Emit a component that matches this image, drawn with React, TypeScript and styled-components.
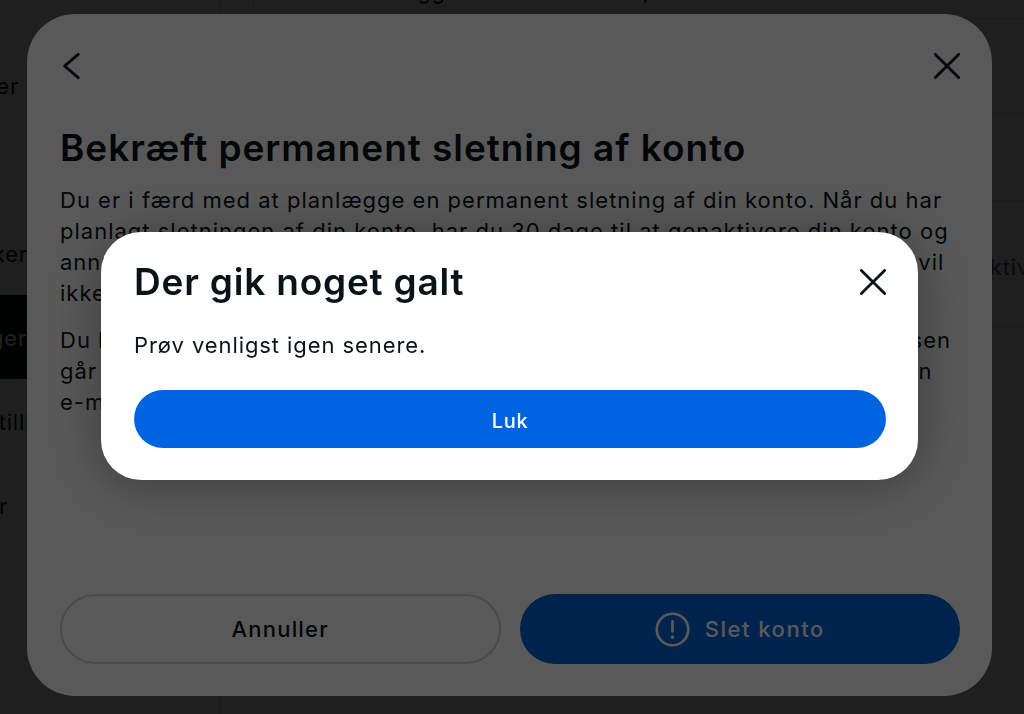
import styled, { createGlobalStyle } from 'styled-components'

const GlobalStyle = createGlobalStyle`
  html, body {
    margin: 0;
    height: 100%;
    background: #fff;
    overflow: hidden;
  }

  body {
    font-family: 'Inter', 'Liberation Sans', sans-serif;
    color: #0a1317;
  }

  * {
    box-sizing: border-box;
  }
`

const Page = styled.div`
  display: flex;
  width: 1024px;
  height: 714px;
  overflow: hidden;
`

const Sidebar = styled.nav`
  flex: 0 0 221px;
  width: 221px;
  min-width: 0;
  padding-top: 43px;
  border-right: 1px solid #dee3e9;
`

const SideRow = styled.div<{ $active?: boolean; $end: number }>`
  display: flex;
  justify-content: flex-end;
  align-items: center;
  height: 84px;
  padding-top: 2px;
  padding-right: ${({ $end }) => 220 - $end}px;
  white-space: nowrap;
  font-size: 22px;
  letter-spacing: 0.8px;
  background: ${({ $active }) => ($active ? '#0a1317' : 'transparent')};
  color: ${({ $active }) => ($active ? '#fff' : '#0a1317')};
`

const Main = styled.main`
  flex: 1;
  margin-left: 32px;
  height: 520px;
  border-left: 1px solid #dee3e9;
  min-width: 0;
  overflow: hidden;
`

const MainRow = styled.div<{ $height: number }>`
  display: flex;
  justify-content: flex-end;
  align-items: center;
  height: ${({ $height }) => $height}px;
  border-bottom: 1px solid #dee3e9;
  white-space: nowrap;
  font-size: 22px;
  letter-spacing: 0.8px;
  color: #465a69;
`

const TopText = styled.div`
  align-self: flex-end;
  margin-bottom: 16px;
  margin-right: 374px;
  line-height: 22px;
  color: #0a1317;
`

const StatusText = styled.span`
  margin-right: -6px;
  padding-top: 6px;
`

const Overlay = styled.div<{ $pad: string }>`
  position: fixed;
  inset: 0;
  display: flex;
  padding: ${({ $pad }) => $pad};
  background: rgba(0, 0, 0, 0.65);
`

const Modal = styled.section`
  flex: 1;
  min-width: 0;
  display: flex;
  flex-direction: column;
  padding: 39px 32px 32px 33px;
  border-radius: 48px;
  background: #fff;
`

const ModalHeader = styled.div`
  display: flex;
  justify-content: space-between;
  align-items: center;
  height: 26px;
`

const IconButton = styled.button`
  display: flex;
  padding: 0;
  border: 0;
  background: none;
  color: #0a1317;
`

const BackButton = styled(IconButton)`
  margin-left: 3px;
`

const ModalTitle = styled.h1`
  margin: 47px 0 15px;
  font-size: 37px;
  line-height: 44px;
  font-weight: 600;
  letter-spacing: 0.95px;
  white-space: nowrap;
`

const Paragraph = styled.p`
  margin: 0 0 16px;
  font-size: 22px;
  line-height: 31px;
  letter-spacing: 1px;
  white-space: nowrap;
`

const ModalFooter = styled.div`
  display: grid;
  grid-template-columns: 1fr 1fr;
  gap: 19px;
  margin-top: auto;
`

const FooterButton = styled.button<{ $primary?: boolean }>`
  display: flex;
  justify-content: center;
  align-items: center;
  gap: 15px;
  height: 70px;
  border-radius: 35px;
  border: ${({ $primary }) => ($primary ? '0' : '2px solid #cbd2d9')};
  background: ${({ $primary }) => ($primary ? '#0064e0' : 'transparent')};
  color: ${({ $primary }) => ($primary ? '#fff' : '#0a1317')};
  font-family: inherit;
  font-size: 22px;
  font-weight: 500;
  letter-spacing: ${({ $primary }) => ($primary ? '1.5px' : '1.2px')};
`

const Dialog = styled.section`
  flex: 1;
  min-width: 0;
  display: flex;
  flex-direction: column;
  padding: 28px 32px 32px 33px;
  border-radius: 40px;
  background: #fff;
  box-shadow: 0 4px 56px rgba(0, 0, 0, 0.35);
`

const DialogHeader = styled.div`
  display: flex;
  justify-content: space-between;
  align-items: center;
  height: 44px;
`

const DialogTitle = styled.h2`
  margin: 0;
  font-size: 37px;
  font-weight: 600;
  line-height: 44px;
  letter-spacing: 0.8px;
`

const DialogText = styled.p`
  margin: 26px 0 29px;
  font-size: 22px;
  line-height: 31px;
  letter-spacing: 0.92px;
`

const CloseDialogButton = styled.button`
  height: 58px;
  padding: 3px 0 0;
  border: 0;
  border-radius: 29px;
  background: #0064e0;
  color: #fff;
  font-family: inherit;
  font-size: 20px;
  font-weight: 500;
  letter-spacing: 0.7px;
`

const CloseIcon = () => (
  <svg width="26" height="26" viewBox="0 0 26 26" fill="none" stroke="currentColor" strokeWidth="2.8" strokeLinecap="round">
    <path d="M1.4 1.4l23.2 23.2M24.6 1.4L1.4 24.6" />
  </svg>
)

const BackIcon = () => (
  <svg width="17" height="26" viewBox="0 0 17 26" fill="none" stroke="currentColor" strokeWidth="2.8" strokeLinecap="round" strokeLinejoin="round">
    <path d="M15.2 1.4L1.6 13l13.6 11.6" />
  </svg>
)

const AlertIcon = () => (
  <svg width="35" height="35" viewBox="0 0 36 36" fill="none" stroke="currentColor" strokeWidth="2.8" strokeLinecap="round">
    <circle cx="18" cy="18" r="16.2" />
    <path d="M18 9.5v10.5" />
    <path d="M18 25.6v.4" strokeWidth="3.4" />
  </svg>
)

const App = () => {
  return (
    <>
      <GlobalStyle />
      <Page>
        <Sidebar>
          <SideRow $end={19}>Profiler</SideRow>
          <SideRow $end={19} />
          <SideRow $end={70}>Sikkerhed</SideRow>
          <SideRow $active $end={27}>Tilknytninger</SideRow>
          <SideRow $end={82}>Indstillinger</SideRow>
          <SideRow $end={8}>Kontakter</SideRow>
        </Sidebar>
        <Main>
          <MainRow $height={19}>
            <TopText>Du logger ud af din konto,</TopText>
          </MainRow>
          <MainRow $height={95} />
          <MainRow $height={87} />
          <MainRow $height={126}>
            <StatusText>Aktiv</StatusText>
          </MainRow>
        </Main>
      </Page>

      <Overlay $pad="14px 32px 18px 27px">
        <Modal>
          <ModalHeader>
            <BackButton aria-label="Tilbage">
              <BackIcon />
            </BackButton>
            <IconButton aria-label="Luk">
              <CloseIcon />
            </IconButton>
          </ModalHeader>
          <ModalTitle>Bekræft permanent sletning af konto</ModalTitle>
          <Paragraph>
            Du er i færd med at planlægge en permanent sletning af din konto. Når du har
            <br />
            planlagt sletningen af din konto, har du 30 dage til at genaktivere din konto og
            <br />
            annullere sletningen. Efter 30 dage bliver kontoen slettet permanent, og du vil
            <br />
            ikke længere kunne få adgang til dine oplysninger.
          </Paragraph>
          <Paragraph>
            Du kan bruge din konto som normalt, indtil 30 dage er gået, og hvis processen
            <br />
            går i gang, sender vi dig en bekræftelse på den adresse der er knyttet til den
            <br />
            e-mail er blevet bekræftet.
          </Paragraph>
          <ModalFooter>
            <FooterButton>Annuller</FooterButton>
            <FooterButton $primary>
              <AlertIcon />
              Slet konto
            </FooterButton>
          </ModalFooter>
        </Modal>
      </Overlay>

      <Overlay $pad="232px 106px 234px 101px">
        <Dialog>
          <DialogHeader>
            <DialogTitle>Der gik noget galt</DialogTitle>
            <IconButton aria-label="Luk">
              <CloseIcon />
            </IconButton>
          </DialogHeader>
          <DialogText>Prøv venligst igen senere.</DialogText>
          <CloseDialogButton>Luk</CloseDialogButton>
        </Dialog>
      </Overlay>
    </>
  )
}

export default App
